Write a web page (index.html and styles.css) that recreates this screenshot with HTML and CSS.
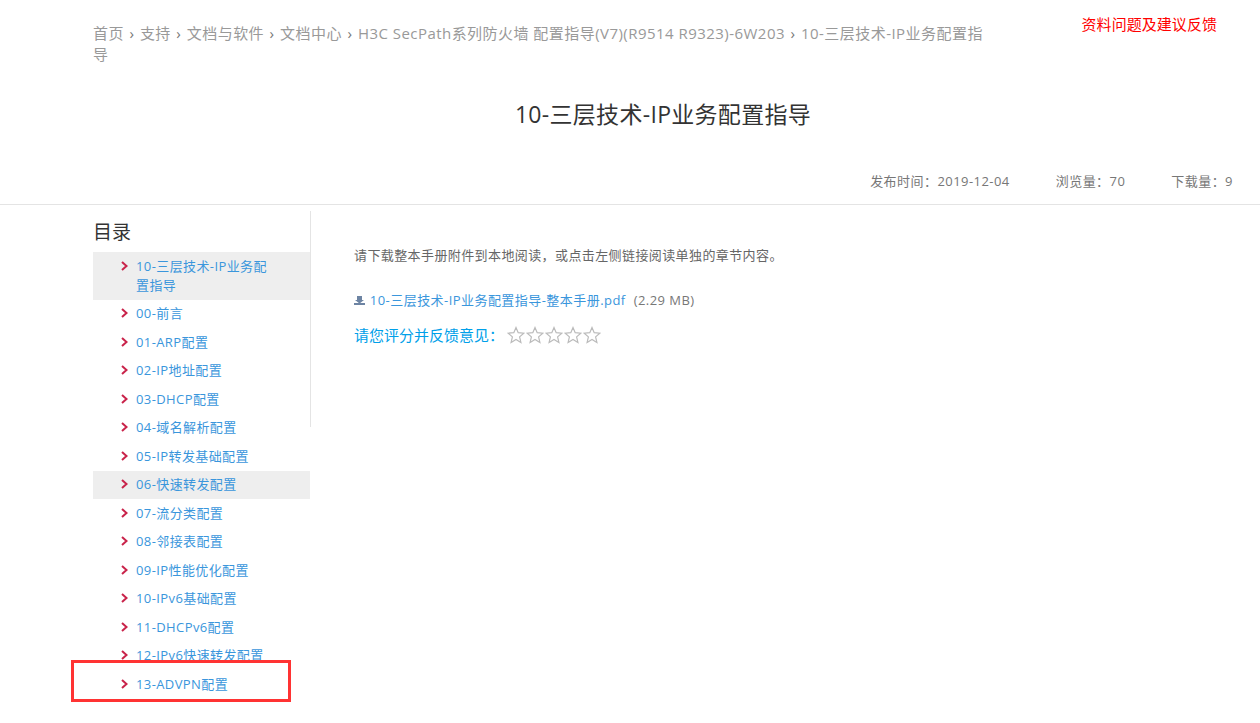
FILE: index.html
```html
<!doctype html>
<html lang="zh-CN">

<head>
    <meta charset="utf-8">
    <title>10-三层技术-IP业务配置指导</title>
    <link rel="stylesheet" href="styles.css">
</head>

<body>
    <svg class="defs">
        <symbol id="chevron" viewBox="0 0 7 10">
            <path d="M1 1l4.500 4L1 9" fill="none" stroke="#c9234a" stroke-width="2" />
        </symbol>
        <symbol id="star" viewBox="0 0 18 18">
            <path d="M9 1.500l2.200 5.200 5.600.5-4.200 3.700 1.300 5.500L9 13.500l-4.900 2.900 1.300-5.500-4.200-3.700 5.600-.5z" fill="none" stroke="#bbb" stroke-width="1.200" />
        </symbol>
    </svg>
    <div class="head">
        <div class="top">
            <div class="crumbs">
                <a>首页</a><span class="sep">›</span><a>支持</a><span class="sep">›</span><a>文档与软件</a><span class="sep">›</span><a>文档中心</a><span class="sep">›</span><a>H3C SecPath系列防火墙 配置指导(V7)(R9514 R9323)-6W203</a><span class="sep">›</span><a>10-三层技术-IP业务配置指导</a>
            </div>
            <a class="feedback">资料问题及建议反馈</a>
        </div>
        <h1 class="title">10-三层技术-IP业务配置指导</h1>
        <div class="meta">
            <span>发布时间：2019-12-04</span>
            <span>浏览量：70</span>
            <span>下载量：9</span>
        </div>
    </div>
    <div class="content">
        <div class="side">
            <h2 class="side-title">目录</h2>
            <ul class="toc">
                <li class="active"><svg class="arrow"><use href="#chevron" /></svg><a>10-三层技术-IP业务配置指导</a></li>
                <li><svg class="arrow"><use href="#chevron" /></svg><a>00-前言</a></li>
                <li><svg class="arrow"><use href="#chevron" /></svg><a>01-ARP配置</a></li>
                <li><svg class="arrow"><use href="#chevron" /></svg><a>02-IP地址配置</a></li>
                <li><svg class="arrow"><use href="#chevron" /></svg><a>03-DHCP配置</a></li>
                <li><svg class="arrow"><use href="#chevron" /></svg><a>04-域名解析配置</a></li>
                <li><svg class="arrow"><use href="#chevron" /></svg><a>05-IP转发基础配置</a></li>
                <li class="active"><svg class="arrow"><use href="#chevron" /></svg><a>06-快速转发配置</a></li>
                <li><svg class="arrow"><use href="#chevron" /></svg><a>07-流分类配置</a></li>
                <li><svg class="arrow"><use href="#chevron" /></svg><a>08-邻接表配置</a></li>
                <li><svg class="arrow"><use href="#chevron" /></svg><a>09-IP性能优化配置</a></li>
                <li><svg class="arrow"><use href="#chevron" /></svg><a>10-IPv6基础配置</a></li>
                <li><svg class="arrow"><use href="#chevron" /></svg><a>11-DHCPv6配置</a></li>
                <li><svg class="arrow"><use href="#chevron" /></svg><a>12-IPv6快速转发配置</a></li>
                <li class="marked"><svg class="arrow"><use href="#chevron" /></svg><a>13-ADVPN配置</a></li>
            </ul>
        </div>
        <div class="main">
            <p class="intro">请下载整本手册附件到本地阅读，或点击左侧链接阅读单独的章节内容。</p>
            <p class="file">
                <svg class="dl" viewBox="0 0 11 9"><path d="M3 0h5v4h2L5.500 7.500 1 4h2z" fill="#6d84a3" /><path d="M0 7h11v2H0z" fill="#6d84a3" /></svg>
                <a>10-三层技术-IP业务配置指导-整本手册.pdf</a><span class="size">(2.29 MB)</span>
            </p>
            <div class="rate">
                <span>请您评分并反馈意见：</span>
                <span class="stars">
                    <svg class="star"><use href="#star" /></svg>
                    <svg class="star"><use href="#star" /></svg>
                    <svg class="star"><use href="#star" /></svg>
                    <svg class="star"><use href="#star" /></svg>
                    <svg class="star"><use href="#star" /></svg>
                </span>
            </div>
        </div>
    </div>
</body>

</html>
```

FILE: styles.css
```css
* {
    box-sizing: border-box;
}
html, body {
    height: 100%;
}
body {
    margin: 0;
    background: #fff;
    color: #666;
    font-family: "Open Sans", "Noto Sans CJK SC", sans-serif;
    font-size: 13px;
    letter-spacing: .4px;
}
.defs {
    display: none;
}
.head {
    height: 205px;
    padding: 23px 27px 0 93px;
    border-bottom: 1px solid #e4e4e4;
}
.top {
    display: flex;
    justify-content: space-between;
    align-items: flex-start;
    height: 42px;
}
.crumbs {
    width: 897px;
    font-size: 15px;
    line-height: 21px;
    letter-spacing: .46px;
    color: #999;
}
.sep {
    margin: 0 5.5px;
    color: #777;
}
.feedback {
    margin: -9px 16px 0 0;
    font-size: 15px;
    line-height: 20px;
    letter-spacing: .05px;
    color: #f00;
}
.title {
    margin: 19px 0 0;
    font-size: 23px;
    line-height: 60px;
    font-weight: 400;
    letter-spacing: .3px;
    color: #333;
    text-align: center;
}
.meta {
    display: flex;
    justify-content: flex-end;
    gap: 46px;
    margin-top: 27px;
    line-height: 20px;
    letter-spacing: .45px;
    color: #777;
}
.content {
    display: flex;
    padding-left: 93px;
}
.side {
    width: 218px;
    height: 216px;
    margin-top: 6px;
    border-right: 1px solid #e4e4e4;
}
.side-title {
    margin: 1px 0 -1px;
    font-size: 19px;
    line-height: 41px;
    font-weight: 400;
    letter-spacing: 0;
    color: #333;
}
.toc {
    margin: 0;
    padding: 0;
    list-style: none;
}
.toc li {
    display: flex;
    gap: 8px;
    padding: 4.75px 30px 4.75px 28px;
    line-height: 19px;
    color: #3a96dc;
    position: relative;
}
.toc li.active {
    background: #eee;
}
.arrow {
    flex: none;
    width: 7px;
    height: 10px;
    margin-top: 4px;
}
.toc li.marked::after {
    content: "";
    box-sizing: border-box;
    position: absolute;
    left: -22px;
    top: -10px;
    width: 220px;
    height: 42px;
    border: 3px solid #f33;
}
.main {
    padding-left: 43px;
}
.intro {
    margin: 40px 0 0;
    line-height: 20px;
    color: #666;
}
.file {
    margin: 25px 0 0;
    line-height: 20px;
    letter-spacing: .45px;
}
.dl {
    width: 11px;
    height: 9px;
    margin-right: 1px;
}
.file a {
    color: #3a96dc;
}
.size {
    margin-left: 8px;
    color: #777;
}
.rate {
    display: flex;
    align-items: center;
    margin-top: 15px;
    font-size: 15px;
    line-height: 20px;
    letter-spacing: 0;
    color: #00a0e9;
}
.stars {
    display: flex;
    gap: 1px;
    margin-left: 3px;
}
.star {
    width: 18px;
    height: 18px;
}
```
